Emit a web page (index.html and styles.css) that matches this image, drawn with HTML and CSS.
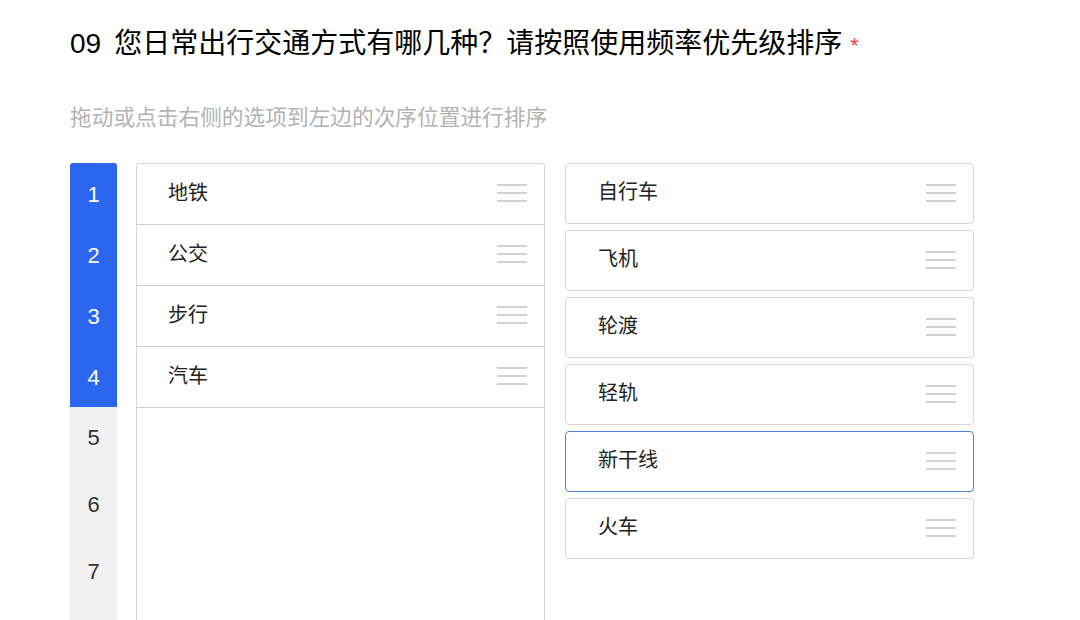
FILE: index.html
```html
<!DOCTYPE html>
<html lang="zh-CN">

<head>
    <meta charset="UTF-8">
    <meta name="viewport" content="width=device-width, initial-scale=1.0">
    <title>排序题</title>

    <link rel="stylesheet" href="styles.css">
</head>

<body>

    <div class="question">
        <h1 class="q-title"><span class="q-num">09</span>您日常出行交通方式有哪几种？请按照使用频率优先级排序<span class="required">*</span></h1>
        <p class="q-hint">拖动或点击右侧的选项到左边的次序位置进行排序</p>

        <div class="sorter">
            <!-- 次序编号 -->
            <ol class="rank">
                <li class="rank-cell filled">1</li>
                <li class="rank-cell filled">2</li>
                <li class="rank-cell filled">3</li>
                <li class="rank-cell filled">4</li>
                <li class="rank-cell">5</li>
                <li class="rank-cell">6</li>
                <li class="rank-cell">7</li>
            </ol>

            <!-- 已排序 -->
            <div class="slots">
                <div class="slot-item"><span>地铁</span><i class="handle"></i></div>
                <div class="slot-item"><span>公交</span><i class="handle"></i></div>
                <div class="slot-item"><span>步行</span><i class="handle"></i></div>
                <div class="slot-item"><span>汽车</span><i class="handle"></i></div>
            </div>

            <!-- 待选项 -->
            <div class="options">
                <div class="option"><span>自行车</span><i class="handle"></i></div>
                <div class="option"><span>飞机</span><i class="handle"></i></div>
                <div class="option"><span>轮渡</span><i class="handle"></i></div>
                <div class="option"><span>轻轨</span><i class="handle"></i></div>
                <div class="option active"><span>新干线</span><i class="handle"></i></div>
                <div class="option"><span>火车</span><i class="handle"></i></div>
            </div>
        </div>
    </div>

</body>

</html>
```

FILE: styles.css
```css
* {
    box-sizing: border-box;
    font-family: 'Liberation Sans', 'Noto Sans CJK SC', sans-serif;
}

html,
body {
    margin: 0;
    height: 100%;
    background: #fff;
    color: #222;
    overflow: hidden;
}

.question {
    padding: 26px 0 0 70px;
}

.q-title {
    margin: 0;
    font-size: 28px;
    line-height: 36px;
    font-weight: normal;
    color: #000;
}

.q-num {
    margin-right: 13px;
}

.required {
    color: #e8453c;
    font-size: 22px;
    margin-left: 8px;
}

.q-hint {
    margin: 39px 0 0;
    font-size: 21.7px;
    line-height: 30px;
    color: #b3b3b3;
}

.sorter {
    display: flex;
    align-items: flex-start;
    margin-top: 30px;
}

.rank {
    list-style: none;
    margin: 0;
    padding: 0 0 40px;
    width: 47px;
    background: #f1f1f1;
    border-radius: 3px 3px 0 0;
    overflow: hidden;
}

.rank-cell {
    height: 67px;
    padding-top: 16px;
    text-align: center;
    font-size: 22px;
    line-height: 30px;
    color: #333;
}

.rank-cell.filled {
    height: 61px;
    padding-top: 17px;
    background: #2c65ee;
    color: #fff;
}

.slots {
    width: 409px;
    height: 520px;
    margin-left: 19px;
    border: 1px solid #d6d6d6;
    border-radius: 3px 3px 0 0;
}

.slot-item,
.option {
    display: flex;
    align-items: center;
    justify-content: space-between;
    font-size: 20px;
    line-height: 1;
    color: #222;
}

.slot-item span,
.option span {
    margin-top: -3px;
}

.slot-item {
    height: 61px;
    padding: 0 17px 0 31px;
    border-bottom: 1px solid #cfcfcf;
}

.options {
    display: flex;
    flex-direction: column;
    gap: 6px;
    width: 409px;
    margin-left: 20px;
}

.option {
    height: 61px;
    padding: 0 17px 0 32px;
    border: 1px solid #d6d6d6;
    border-radius: 4px;
}

.option.active {
    border-color: #4d7fe6;
}

.handle {
    display: block;
    width: 30px;
    height: 18px;
    margin-top: -2px;
    background: linear-gradient(#d2d2d2, #d2d2d2) 0 0 / 100% 2px no-repeat,
        linear-gradient(#d2d2d2, #d2d2d2) 0 8px / 100% 2px no-repeat,
        linear-gradient(#d2d2d2, #d2d2d2) 0 16px / 100% 2px no-repeat;
}
```
